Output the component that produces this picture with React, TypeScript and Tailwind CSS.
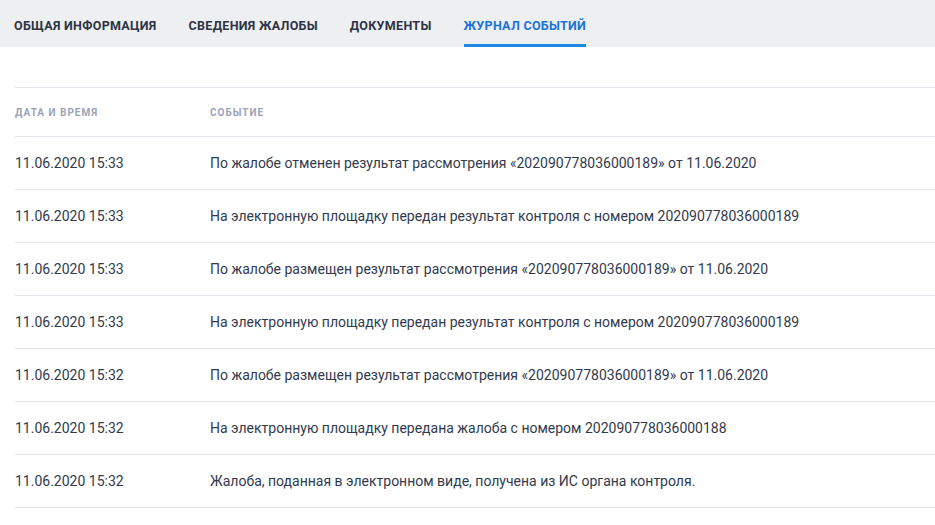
const tabs = ["Общая информация", "Сведения жалобы", "Документы", "Журнал событий"];

const events = [
  ["11.06.2020 15:33", "По жалобе отменен результат рассмотрения «202090778036000189» от 11.06.2020"],
  ["11.06.2020 15:33", "На электронную площадку передан результат контроля с номером 202090778036000189"],
  ["11.06.2020 15:33", "По жалобе размещен результат рассмотрения «202090778036000189» от 11.06.2020"],
  ["11.06.2020 15:33", "На электронную площадку передан результат контроля с номером 202090778036000189"],
  ["11.06.2020 15:32", "По жалобе размещен результат рассмотрения «202090778036000189» от 11.06.2020"],
  ["11.06.2020 15:32", "На электронную площадку передана жалоба с номером 202090778036000188"],
  ["11.06.2020 15:32", "Жалоба, поданная в электронном виде, получена из ИС органа контроля."],
];

const App = () => {
  return (
    <div className="w-[935px] h-[525px] bg-white overflow-hidden font-['Roboto',sans-serif]">
      <div className="h-[47px] bg-[#eeeff1] flex gap-8 px-[14px]">
        {tabs.map((t, i) => (
          <div
            key={t}
            className={
              i === 3
                ? "h-full flex items-center pt-[9px] border-b-[3px] border-[#1e88e5] text-[12.5px] font-bold uppercase tracking-[0.3px] text-[#1a73dc]"
                : "h-full flex items-center pt-[9px] border-b-[3px] border-transparent text-[12.5px] font-bold uppercase tracking-[0.3px] text-[#2d3445]"
            }
          >
            {t}
          </div>
        ))}
      </div>

      <div className="mt-[40px] ml-[15px] border-t border-[#e3e4ee]">
        <div className="h-[49px] flex items-center border-b border-[#e3e4ee] text-[10px] font-bold uppercase tracking-[1px] text-[#9ba3ba]">
          <div className="w-[195px]">Дата и время</div>
          <div>Событие</div>
        </div>
        {events.map(([date, text], i) => (
          <div
            key={i}
            className="h-[53px] flex items-center border-b border-[#e3e4ee] text-[14px] text-[#323a4c]"
          >
            <div className="w-[195px]">{date}</div>
            <div>{text}</div>
          </div>
        ))}
      </div>
    </div>
  );
};

export default App;
